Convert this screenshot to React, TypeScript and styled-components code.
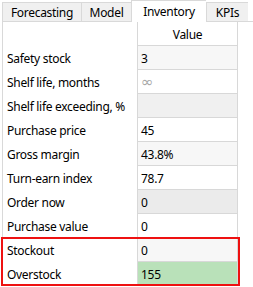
import React from 'react';
import styled, { createGlobalStyle } from 'styled-components';

interface RowData {
  label: string;
  value: string;
  shade?: 'white' | 'light' | 'mid' | 'dark' | 'green';
  muted?: boolean;
}

const tabs = [
  { name: 'Forecasting', width: 79 },
  { name: 'Model', width: 50 },
  { name: 'Inventory', width: 75, active: true },
  { name: 'KPIs', width: 42 },
];

const rows: RowData[] = [
  { label: 'Safety stock', value: '3', shade: 'light' },
  { label: 'Shelf life, months', value: '∞', shade: 'white', muted: true },
  { label: 'Shelf life exceeding, %', value: '', shade: 'mid' },
  { label: 'Purchase price', value: '45', shade: 'white' },
  { label: 'Gross margin', value: '43.8%', shade: 'light' },
  { label: 'Turn-earn index', value: '78.7', shade: 'white' },
  { label: 'Order now', value: '0', shade: 'dark' },
  { label: 'Purchase value', value: '0', shade: 'white' },
];

const highlighted: RowData[] = [
  { label: 'Stockout', value: '0', shade: 'light' },
  { label: 'Overstock', value: '155', shade: 'green' },
];

const shades = {
  white: '#ffffff',
  light: '#f7f7f7',
  mid: '#f0f0f0',
  dark: '#ebebeb',
  green: '#b9e1b9',
};

const GlobalStyle = createGlobalStyle`
  body {
    margin: 0;
    background: #ffffff;
    font-family: 'Noto Sans', 'Open Sans', sans-serif;
    font-size: 12px;
    letter-spacing: -0.3px;
    color: #000;
  }
`;

const TableRow = ({ label, value, shade = 'white', muted }: RowData) => (
  <Row>
    <Label>{label}</Label>
    <ValueCell bg={shades[shade]} muted={muted}>
      {value}
    </ValueCell>
  </Row>
);

const App = () => {
  return (
    <Window>
      <GlobalStyle />
      <TabBar>
        {tabs.map((t) => (
          <Tab key={t.name} width={t.width} active={!!t.active}>
            {t.name}
          </Tab>
        ))}
        <TabFiller />
      </TabBar>
      <Pane>
        <Row>
          <Label />
          <HeaderCell>Value</HeaderCell>
        </Row>
        {rows.map((r) => (
          <TableRow key={r.label} {...r} />
        ))}
        <Highlight>
          {highlighted.map((r) => (
            <TableRow key={r.label} {...r} />
          ))}
        </Highlight>
      </Pane>
    </Window>
  );
};

export default App;

const Window = styled.div`
  width: 253px;
  height: 287px;
  overflow: hidden;
  background: #fff;
`;

const TabBar = styled.div`
  display: flex;
  align-items: flex-end;
  height: 22px;
  padding-left: 2px;
`;

const Tab = styled.div<{ width: number; active: boolean }>`
  box-sizing: border-box;
  width: ${(p) => p.width}px;
  height: ${(p) => (p.active ? 22 : 20)}px;
  display: flex;
  align-items: center;
  justify-content: center;
  padding-bottom: ${(p) => (p.active ? 1 : 0)}px;
  background: ${(p) => (p.active ? '#ffffff' : '#f0f0f0')};
  border: 1px solid #d9d9d9;
  border-right: none;
  border-bottom: ${(p) => (p.active ? 'none' : '1px solid #d9d9d9')};
  white-space: nowrap;

  &:last-of-type {
    border-right: 1px solid #d9d9d9;
  }
`;

const TabFiller = styled.div`
  flex: 1;
  height: 1px;
  background: #d9d9d9;
`;

const Pane = styled.div`
  margin-left: 2px;
  border-left: 1px solid #d9d9d9;
  display: flex;
  flex-direction: column;
  align-items: flex-start;
`;

const Row = styled.div`
  display: flex;
  height: 24px;
`;

const Label = styled.div`
  width: 134px;
  box-sizing: border-box;
  padding: 1px 0 0 4px;
  display: flex;
  align-items: center;
  white-space: nowrap;
`;

const ValueCell = styled.div<{ bg: string; muted?: boolean }>`
  box-sizing: border-box;
  width: 101px;
  padding: 1px 0 0 3px;
  display: flex;
  align-items: center;
  background: ${(p) => p.bg};
  color: ${(p) => (p.muted ? '#a8a8a8' : '#000')};
  font-family: ${(p) => (p.muted ? "'DejaVu Sans', sans-serif" : 'inherit')};
  font-size: ${(p) => (p.muted ? '15px' : 'inherit')};
  border-left: 1px solid #d8d8d8;
  border-right: 1px solid #d8d8d8;
  border-bottom: 1px solid #d8d8d8;
`;

const HeaderCell = styled(ValueCell).attrs({ bg: '#ffffff' })`
  justify-content: center;
  padding-left: 0;
`;

const Highlight = styled.div`
  position: relative;

  &::after {
    content: '';
    position: absolute;
    left: -2px;
    right: -2px;
    top: -1px;
    bottom: 0;
    border: 2px solid #ee1111;
    pointer-events: none;
  }
`;
